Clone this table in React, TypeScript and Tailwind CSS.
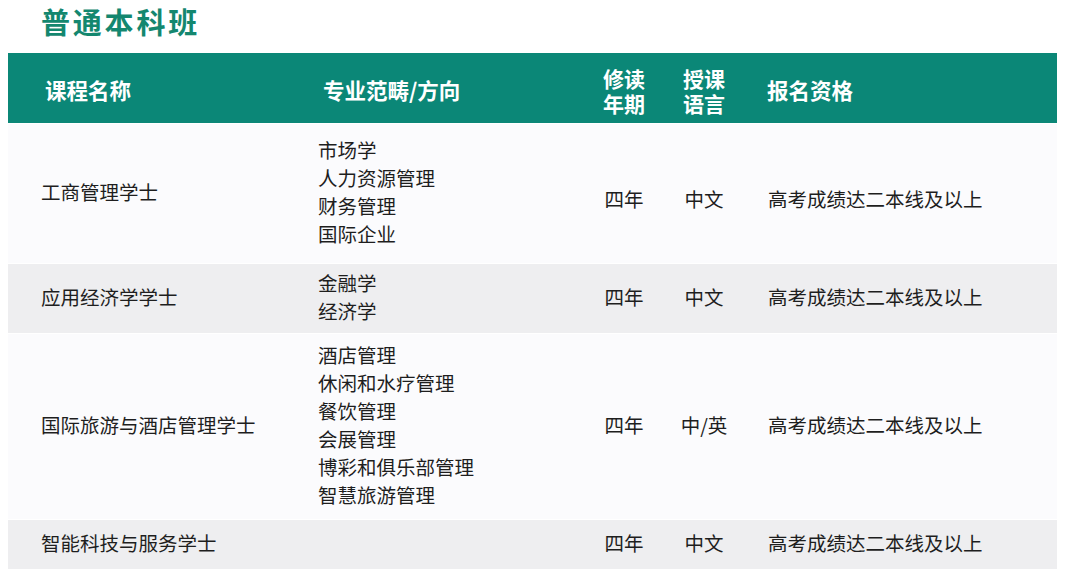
import React from "react";

const font = { fontFamily: '"Noto Sans CJK SC", "Noto Sans", sans-serif' };

type Row = {
  name: string;
  majors: string[];
  years: string;
  lang: string;
  req: string;
  h: string;
  bg: string;
  shift?: boolean;
};

const rows: Row[] = [
  {
    name: "工商管理学士",
    majors: ["市场学", "人力资源管理", "财务管理", "国际企业"],
    years: "四年",
    lang: "中文",
    req: "高考成绩达二本线及以上",
    h: "h-[139px]",
    bg: "bg-[#fbfbfd]",
    shift: true,
  },
  {
    name: "应用经济学学士",
    majors: ["金融学", "经济学"],
    years: "四年",
    lang: "中文",
    req: "高考成绩达二本线及以上",
    h: "h-[69px]",
    bg: "bg-[#eeeef0]",
  },
  {
    name: "国际旅游与酒店管理学士",
    majors: ["酒店管理", "休闲和水疗管理", "餐饮管理", "会展管理", "博彩和俱乐部管理", "智慧旅游管理"],
    years: "四年",
    lang: "中/英",
    req: "高考成绩达二本线及以上",
    h: "h-[185px]",
    bg: "bg-[#fbfbfd]",
  },
  {
    name: "智能科技与服务学士",
    majors: [],
    years: "四年",
    lang: "中文",
    req: "高考成绩达二本线及以上",
    h: "h-[49px]",
    bg: "bg-[#eeeef0]",
  },
];

export default function App() {
  return (
    <div className="w-[1073px] h-[581px] bg-white overflow-hidden" style={font}>
      <div className="h-[53px] pl-[41px]">
        <h1 className="text-[29px] leading-[42px] font-bold tracking-[2.8px] text-[#14876f]">普通本科班</h1>
      </div>
      <div className="ml-[8px] w-[1049px] flex flex-col gap-[1px]">
        <div className="h-[70px] pt-[5px] bg-[#0b8777] text-white font-bold text-[21.5px] grid grid-cols-[280px_296px_80px_80px_313px] items-center">
          <div className="pl-[37px]">课程名称</div>
          <div className="pl-[35px]">专业范畴/方向</div>
          <div className="text-center text-[21px] leading-[25px]">
            修读
            <br />
            年期
          </div>
          <div className="text-center text-[21px] leading-[25px]">
            授课
            <br />
            语言
          </div>
          <div className="pl-[23px]">报名资格</div>
        </div>
        {rows.map((r, i) => (
          <div
            key={i}
            className={`${r.h} ${r.bg} pb-[4px] grid grid-cols-[280px_296px_80px_80px_313px] items-center text-[19.5px] leading-[28px] text-[#1e1e1e]`}
          >
            <div className="pl-[33px]">{r.name}</div>
            <div className="pl-[30px]">
              {r.majors.map((m) => (
                <div key={m}>{m}</div>
              ))}
            </div>
            <div className={`text-center ${r.shift ? "pt-[14px]" : ""}`}>{r.years}</div>
            <div className={`text-center ${r.shift ? "pt-[14px]" : ""}`}>{r.lang}</div>
            <div className={`pl-[24px] ${r.shift ? "pt-[14px]" : ""}`}>{r.req}</div>
          </div>
        ))}
      </div>
    </div>
  );
}
